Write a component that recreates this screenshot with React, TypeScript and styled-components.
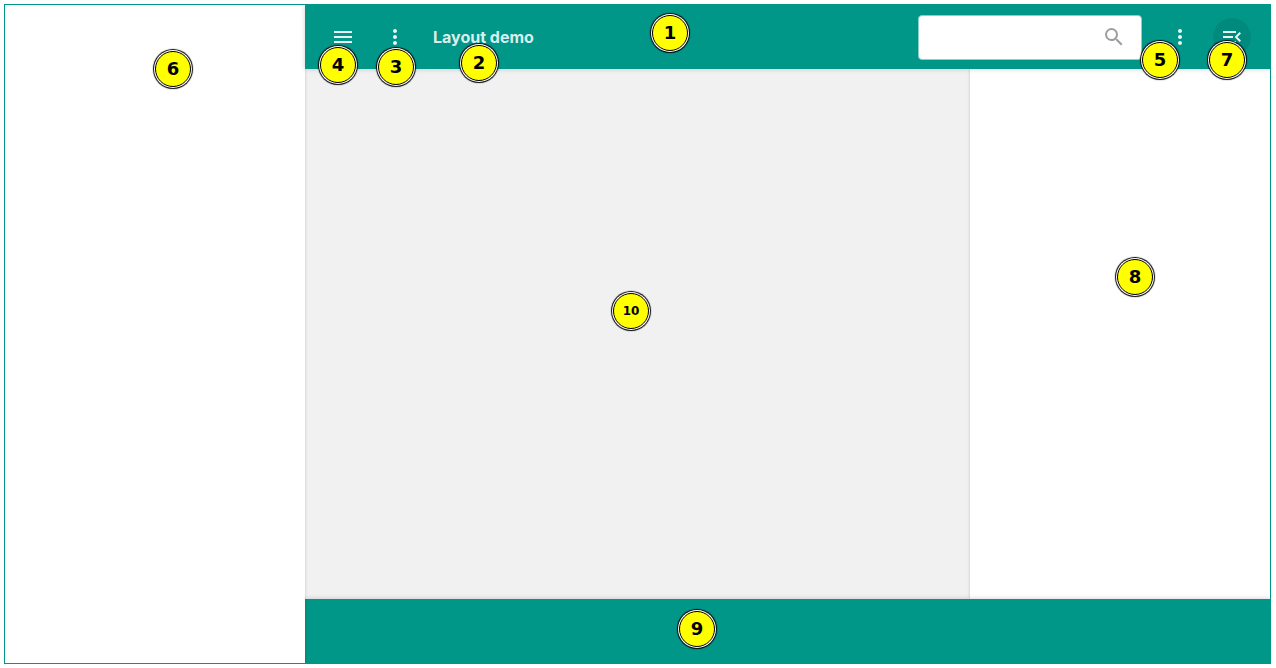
import React from "react";
import styled, { createGlobalStyle } from "styled-components";
import { MdMenu, MdMenuOpen, MdMoreVert, MdSearch } from "react-icons/md";

const teal = "#009688";

const GlobalStyle = createGlobalStyle`
  *, *::before, *::after { box-sizing: border-box; }
  body { margin: 0; background: #fff; font-family: Inter, "Liberation Sans", sans-serif; }
`;

const Frame = styled.div`
  position: relative;
  display: flex;
  min-height: calc(100vh - 8px);
  margin: 4px 5px 4px 4px;
  border: 1px solid ${teal};
  overflow: hidden;
`;

const Navigation = styled.nav`
  position: relative;
  z-index: 1;
  flex: 0 0 300px;
  background: #fff;
  box-shadow: 0 0 3px rgba(0, 0, 0, 0.2);
`;

const Page = styled.div`
  flex: 1;
  min-width: 0;
  display: flex;
  flex-direction: column;
`;

const Header = styled.header`
  position: relative;
  z-index: 2;
  display: flex;
  align-items: center;
  gap: 14px;
  height: 64px;
  padding: 0 19px;
  background: ${teal};
  box-shadow: 0 0 5px rgba(0, 0, 0, 0.2);
`;

const IconButton = styled.button<{ $active?: boolean }>`
  display: flex;
  align-items: center;
  justify-content: center;
  flex: none;
  width: 38px;
  height: 38px;
  padding: 0;
  border: 0;
  border-radius: 50%;
  background: ${(p) => (p.$active ? "rgba(0, 0, 0, 0.08)" : "transparent")};
  color: rgba(255, 255, 255, 0.9);
  cursor: pointer;
`;

const Title = styled.h1`
  flex: 1;
  margin: 0;
  padding-left: 5px;
  color: rgba(255, 255, 255, 0.87);
  font-size: 16px;
  font-weight: 700;
  line-height: 24px;
`;

const SearchField = styled.label`
  display: flex;
  align-items: center;
  width: 224px;
  height: 45px;
  margin-right: 5px;
  padding: 0 15px 0 12px;
  border: 1px solid #8ccfc8;
  border-radius: 4px;
  background: #fff;
  color: #9e9e9e;
`;

const SearchInput = styled.input`
  flex: 1;
  min-width: 0;
  border: 0;
  outline: 0;
  background: transparent;
  font: inherit;
`;

const Body = styled.div`
  flex: 1;
  display: flex;
`;

const Content = styled.main`
  flex: 1;
  background: #f1f1f1;
`;

const Aside = styled.aside`
  flex: 0 0 300px;
  background: #fff;
  box-shadow: 0 0 3px rgba(0, 0, 0, 0.2);
`;

const Footer = styled.footer`
  position: relative;
  height: 64px;
  background: ${teal};
  box-shadow: 0 0 5px rgba(0, 0, 0, 0.2);
`;

const Marker = styled.span<{ $x: number; $y: number; $small?: boolean }>`
  position: absolute;
  z-index: 3;
  left: ${(p) => p.$x}px;
  top: ${(p) => p.$y}px;
  display: flex;
  align-items: center;
  justify-content: center;
  width: 36px;
  height: 36px;
  margin: -18px 0 0 -18px;
  border: 1px solid #000;
  border-radius: 50%;
  background: #ff0;
  box-shadow: 0 0 0 1px #fff, 0 0 1px 2px #000;
  color: #000;
  font-family: "DejaVu Sans", sans-serif;
  font-size: ${(p) => (p.$small ? 12 : 18)}px;
  font-weight: 700;
  line-height: 1;
`;

const markers = [
  { n: 1, x: 665, y: 28 },
  { n: 2, x: 474, y: 58 },
  { n: 3, x: 391, y: 62 },
  { n: 4, x: 333, y: 60 },
  { n: 5, x: 1155, y: 55 },
  { n: 6, x: 168, y: 64 },
  { n: 7, x: 1222, y: 55 },
  { n: 8, x: 1130, y: 272 },
  { n: 9, x: 692, y: 624 },
  { n: 10, x: 626, y: 306 },
];

export default function App() {
  return (
    <>
      <GlobalStyle />
      <Frame>
        <Navigation aria-label="Main navigation" />
        <Page>
          <Header>
            <IconButton type="button" aria-label="Menu">
              <MdMenu size={24} />
            </IconButton>
            <IconButton type="button" aria-label="More options">
              <MdMoreVert size={24} />
            </IconButton>
            <Title>Layout demo</Title>
            <SearchField>
              <SearchInput type="text" aria-label="Search" />
              <MdSearch size={24} />
            </SearchField>
            <IconButton type="button" aria-label="More actions">
              <MdMoreVert size={24} />
            </IconButton>
            <IconButton type="button" aria-label="Toggle side panel" $active>
              <MdMenuOpen size={24} />
            </IconButton>
          </Header>
          <Body>
            <Content />
            <Aside />
          </Body>
          <Footer />
        </Page>
        {markers.map((m) => (
          <Marker key={m.n} $x={m.x} $y={m.y} $small={m.n > 9}>
            {m.n}
          </Marker>
        ))}
      </Frame>
    </>
  );
}
